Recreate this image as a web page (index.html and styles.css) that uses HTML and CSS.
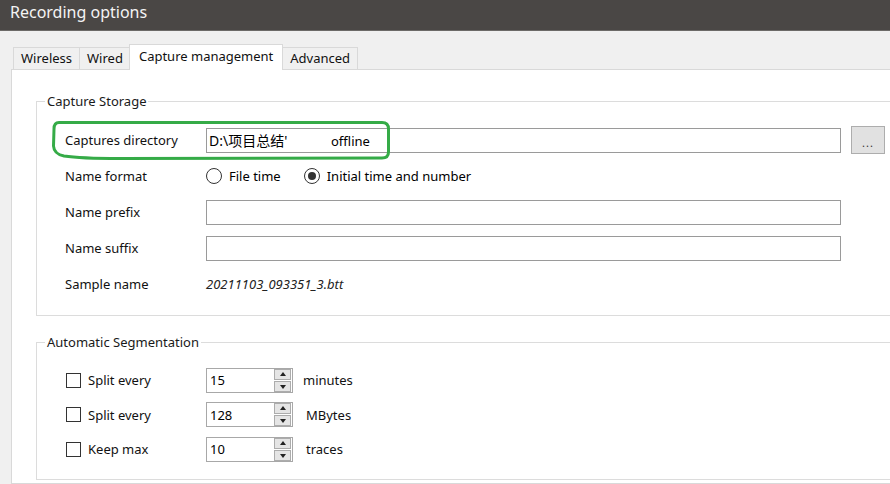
FILE: index.html
```html
<!DOCTYPE html>
<html lang="en">

<head>
  <meta charset="UTF-8">
  <meta name="viewport" content="width=device-width, initial-scale=1.0">
  <title>Recording options</title>
  <link rel="stylesheet" href="styles.css">
</head>

<body>
  <div class="titlebar">Recording options</div>

  <div class="dialog">
    <div class="tabs">
      <div class="tab">Wireless</div>
      <div class="tab">Wired</div>
      <div class="tab active">Capture management</div>
      <div class="tab">Advanced</div>
    </div>

    <div class="panel">
      <fieldset class="group storage">
        <legend>Capture Storage</legend>

        <div class="row">
          <span class="label">Captures directory</span>
          <div class="field path"><span class="path-head">D:\项目总结'</span><span>offline</span></div>
          <button class="browse">...</button>
        </div>

        <div class="row">
          <span class="label">Name format</span>
          <label class="option"><span class="radio"></span>File time</label>
          <label class="option"><span class="radio checked"></span>Initial time and number</label>
        </div>

        <div class="row">
          <span class="label">Name prefix</span>
          <div class="field"></div>
        </div>

        <div class="row">
          <span class="label">Name suffix</span>
          <div class="field"></div>
        </div>

        <div class="row">
          <span class="label">Sample name</span>
          <span class="sample">20211103_093351_3.btt</span>
        </div>
      </fieldset>

      <fieldset class="group segmentation">
        <legend>Automatic Segmentation</legend>

        <div class="row seg-row">
          <label class="check-label"><span class="checkbox"></span>Split every</label>
          <div class="spin">
            <span class="spin-value">15</span>
            <span class="spin-btns"><span class="spin-up"></span><span class="spin-down"></span></span>
          </div>
          <span class="unit">minutes</span>
        </div>

        <div class="row seg-row">
          <label class="check-label"><span class="checkbox"></span>Split every</label>
          <div class="spin">
            <span class="spin-value">128</span>
            <span class="spin-btns"><span class="spin-up"></span><span class="spin-down"></span></span>
          </div>
          <span class="unit shift">MBytes</span>
        </div>

        <div class="row seg-row">
          <label class="check-label"><span class="checkbox"></span>Keep max</label>
          <div class="spin">
            <span class="spin-value">10</span>
            <span class="spin-btns"><span class="spin-up"></span><span class="spin-down"></span></span>
          </div>
          <span class="unit shift">traces</span>
        </div>
      </fieldset>
    </div>

    <!-- hand drawn highlight around the captures directory row -->
    <svg class="highlight" width="344" height="44" viewBox="0 0 344 44">
      <path d="M9 3.5 L332 3.5 Q338.5 3.5 338.5 10 L338.5 33 Q338.5 39 332 39 L70 39.5 Q30 39.5 14 37 Q4 35 3.5 27 L4 10 Q4 3.5 9 3.5 Z"
        fill="none" stroke="#35ab47" stroke-width="3" stroke-linejoin="round" />
    </svg>
  </div>
</body>

</html>
```

FILE: styles.css
```css
html,
body {
  margin: 0;
  overflow: hidden;
}

body {
  font-family: "Noto Sans", "Noto Sans CJK SC", sans-serif;
  font-size: 13px;
  color: #000;
  background-color: #f0f0f0;
  width: 890px;
  height: 484px;
}

.titlebar {
  height: 31px;
  box-sizing: border-box;
  padding: 2px 0 0 10px;
  background-color: #4a4745;
  border-bottom: 1px solid #6c6a68;
  color: #f4f4f4;
  font-size: 16px;
  line-height: 20px;
}

.dialog {
  position: relative;
  padding: 13px 0 0 11px;
}

.tabs {
  display: flex;
  align-items: flex-end;
  margin-left: 2px;
  position: relative;
  z-index: 1;
}

.tab {
  height: 22px;
  box-sizing: border-box;
  padding: 0 7px;
  line-height: 21px;
  background-color: #f0f0f0;
  border: 1px solid #d9d9d9;
  border-bottom: none;
  margin-right: -1px;
  color: #111;
}

.tab.active {
  height: 26px;
  padding: 0 9px;
  margin: 0 -1px -1px -1px;
  line-height: 22px;
  background-color: #fff;
  position: relative;
}

.panel {
  background-color: #fff;
  border: 1px solid #d9d9d9;
  border-right: none;
  margin-right: -20px;
  padding: 22px 0 3px 24px;
}

.group {
  margin: 0;
  border: 1px solid #dcdcdc;
  padding: 12px 0 13px 28px;
  min-width: 0;
}

.group legend {
  margin-left: -20px;
  padding: 0 2px;
  line-height: 18px;
  color: #1a1a1a;
}

.segmentation {
  margin-top: 17px;
  padding: 12px 0 12px 28px;
}

.row {
  display: flex;
  align-items: center;
  height: 36px;
}

.label {
  width: 141px;
  flex: none;
  color: #111;
}

.field {
  width: 635px;
  height: 25px;
  box-sizing: border-box;
  border: 1px solid #9a9a9a;
  background-color: #fff;
  padding: 0 2px;
  line-height: 23px;
}

.path-head {
  display: inline-block;
  width: 122px;
  font-size: 14px;
}

.browse {
  width: 34px;
  height: 28px;
  margin: 0 0 1px 10px;
  padding: 6px 0 0 0;
  background-color: #e1e1e1;
  border: 1px solid #adadad;
  font-family: inherit;
  font-size: 11px;
  line-height: 11px;
  color: #333;
  letter-spacing: 1px;
}

.option {
  display: flex;
  align-items: center;
  gap: 7px;
  margin-right: 23px;
}

.radio {
  width: 14px;
  height: 14px;
  border: 1px solid #333;
  border-radius: 50%;
  position: relative;
  background-color: #fff;
}

.radio.checked::after {
  content: "";
  position: absolute;
  left: 3px;
  top: 3px;
  width: 8px;
  height: 8px;
  border-radius: 50%;
  background-color: #333;
}

.sample {
  font-style: italic;
  color: #222;
}

.seg-row {
  height: 34.5px;
}

.check-label {
  width: 140px;
  margin-left: 1px;
  display: flex;
  align-items: center;
  gap: 7px;
  color: #111;
}

.checkbox {
  width: 13px;
  height: 13px;
  border: 1px solid #333;
  background-color: #fff;
}

.spin {
  width: 87px;
  height: 25px;
  box-sizing: border-box;
  border: 1px solid #a8a8a8;
  display: flex;
  align-items: center;
  justify-content: space-between;
  padding: 0 1px 0 3px;
}

.spin-btns {
  display: flex;
  flex-direction: column;
  gap: 1px;
  width: 17px;
}

.spin-up,
.spin-down {
  height: 9px;
  background-color: #e5e5e5;
  border: 1px solid #acacac;
  position: relative;
}

.spin-up::after,
.spin-down::after {
  content: "";
  position: absolute;
  left: 5px;
  border-left: 3.5px solid transparent;
  border-right: 3.5px solid transparent;
}

.spin-up::after {
  top: 2px;
  border-bottom: 4px solid #222;
}

.spin-down::after {
  top: 3px;
  border-top: 4px solid #222;
}

.unit {
  margin-left: 10px;
  color: #111;
}

.unit.shift {
  margin-left: 13px;
}

.highlight {
  position: absolute;
  left: 50px;
  top: 88px;
}
```
